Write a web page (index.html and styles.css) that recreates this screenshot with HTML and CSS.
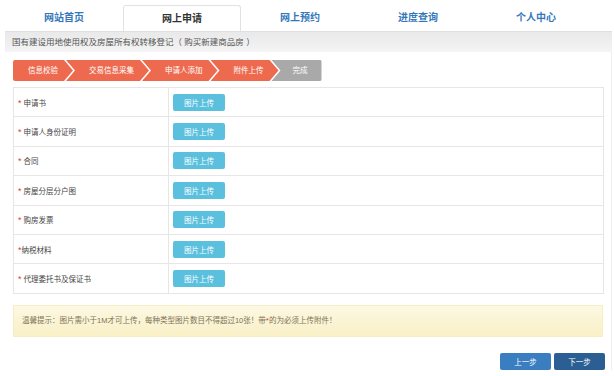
FILE: index.html
```html
<!DOCTYPE html>
<html>
<head>
  <meta charset="UTF-8">
  <title>网上申请</title>
  <link rel="stylesheet" href="styles.css">
</head>
<body>
  <div class="page">
    <ul class="tabs">
      <li class="tab">网站首页</li>
      <li class="tab active">网上申请</li>
      <li class="tab">网上预约</li>
      <li class="tab">进度查询</li>
      <li class="tab">个人中心</li>
    </ul>

    <div class="title-bar">国有建设用地使用权及房屋所有权转移登记（ 购买新建商品房 ）</div>

    <div class="content">
      <ol class="steps">
        <li class="step first">信息校验</li>
        <li class="step">交易信息采集</li>
        <li class="step">申请人添加</li>
        <li class="step">附件上传</li>
        <li class="step last">完成</li>
      </ol>

      <table class="files">
        <tr><td class="label"><span class="req">*</span> 申请书</td><td><button class="upload">图片上传</button></td></tr>
        <tr><td class="label"><span class="req">*</span> 申请人身份证明</td><td><button class="upload">图片上传</button></td></tr>
        <tr><td class="label"><span class="req">*</span> 合同</td><td><button class="upload">图片上传</button></td></tr>
        <tr><td class="label"><span class="req">*</span> 房屋分层分户图</td><td><button class="upload">图片上传</button></td></tr>
        <tr><td class="label"><span class="req">*</span> 购房发票</td><td><button class="upload">图片上传</button></td></tr>
        <tr><td class="label"><span class="req">*</span>纳税材料</td><td><button class="upload">图片上传</button></td></tr>
        <tr><td class="label"><span class="req">*</span> 代理委托书及保证书</td><td><button class="upload">图片上传</button></td></tr>
      </table>

      <div class="tip">温馨提示：图片需小于1M才可上传，每种类型图片数目不得超过10张！带<span class="req">*</span>的为必须上传附件！</div>

      <div class="actions">
        <button class="btn prev">上一步</button>
        <button class="btn next">下一步</button>
      </div>
    </div>
  </div>
</body>
</html>
```

FILE: styles.css
```css
body {
  margin: 0;
  background: #fff;
  font-family: "Liberation Sans", "Noto Sans CJK SC", sans-serif;
  color: #333;
}

.page {
  margin: 5px 0 0 5px;
  width: 607px;
}

.tabs {
  list-style: none;
  margin: 0;
  padding: 0;
  display: flex;
  height: 26px;
}

.tab {
  width: 118px;
  text-align: center;
  line-height: 25px;
  font-size: 10px;
  font-weight: bold;
  color: #3577ba;
  box-sizing: border-box;
}

.tab.active {
  color: #333;
  background: #fff;
  border: 1px solid #e2e2e2;
  border-bottom: none;
  border-radius: 3px 3px 0 0;
  line-height: 26px;
  position: relative;
  z-index: 1;
}

.title-bar {
  height: 21px;
  box-sizing: border-box;
  border-top: 1px solid #e0e0e0;
  background: linear-gradient(#e9e9e9, #f4f4f4);
  padding-left: 7px;
  line-height: 20px;
  font-size: 8.5px;
  color: #555;
}

.content {
  padding: 8px 8px 0 8px;
  border-right: 1px solid #eee;
}

.steps {
  list-style: none;
  margin: 0;
  padding: 0;
  display: flex;
  height: 21px;
}

.step {
  background: #ee6a4f;
  color: #fff;
  font-size: 7.5px;
  line-height: 21px;
  padding: 0 15px 0 23px;
  margin-left: -7px;
  clip-path: polygon(0 0, calc(100% - 9px) 0, 100% 50%, calc(100% - 9px) 100%, 0 100%, 9px 50%);
}

.step.first {
  margin-left: 0;
  padding-left: 15px;
  border-radius: 2px 0 0 2px;
  clip-path: polygon(0 0, calc(100% - 9px) 0, 100% 50%, calc(100% - 9px) 100%, 0 100%);
}

.step.last {
  background: #a9a9a9;
  padding: 0 14px 0 21px;
  border-radius: 0 2px 2px 0;
  clip-path: polygon(0 0, 100% 0, 100% 100%, 0 100%, 9px 50%);
}

.files {
  margin-top: 6px;
  width: 591px;
  border-collapse: collapse;
  font-size: 7.5px;
}

.files td {
  border: 1px solid #e6e6e6;
  height: 28.4px;
  padding: 0 0 0 4px;
}

.files td.label {
  width: 150px;
  color: #444;
}

.req {
  color: #e4393c;
  font-size: 9px;
}

.upload {
  display: block;
  width: 52px;
  height: 17px;
  border: none;
  border-radius: 2px;
  background: #5bc0de;
  color: #fff;
  font-family: inherit;
  font-size: 7.5px;
  padding: 0;
}

.tip {
  margin-top: 11px;
  height: 32px;
  box-sizing: border-box;
  border: 1px solid #f6edc4;
  background: linear-gradient(#fcf8e3, #f9f0c6);
  padding-left: 8px;
  line-height: 30px;
  font-size: 7.5px;
  color: #7d7159;
}

.tip .req {
  font-size: 8px;
}

.actions {
  margin-top: 16px;
  display: flex;
  justify-content: flex-end;
  gap: 3px;
  margin-right: -2px;
}

.btn {
  width: 51px;
  height: 17px;
  border: none;
  border-radius: 2px;
  color: #fff;
  font-family: inherit;
  font-size: 7.5px;
  padding: 0;
}

.btn.prev {
  background: #3a7ec1;
}

.btn.next {
  background: #2b5f94;
}
```
